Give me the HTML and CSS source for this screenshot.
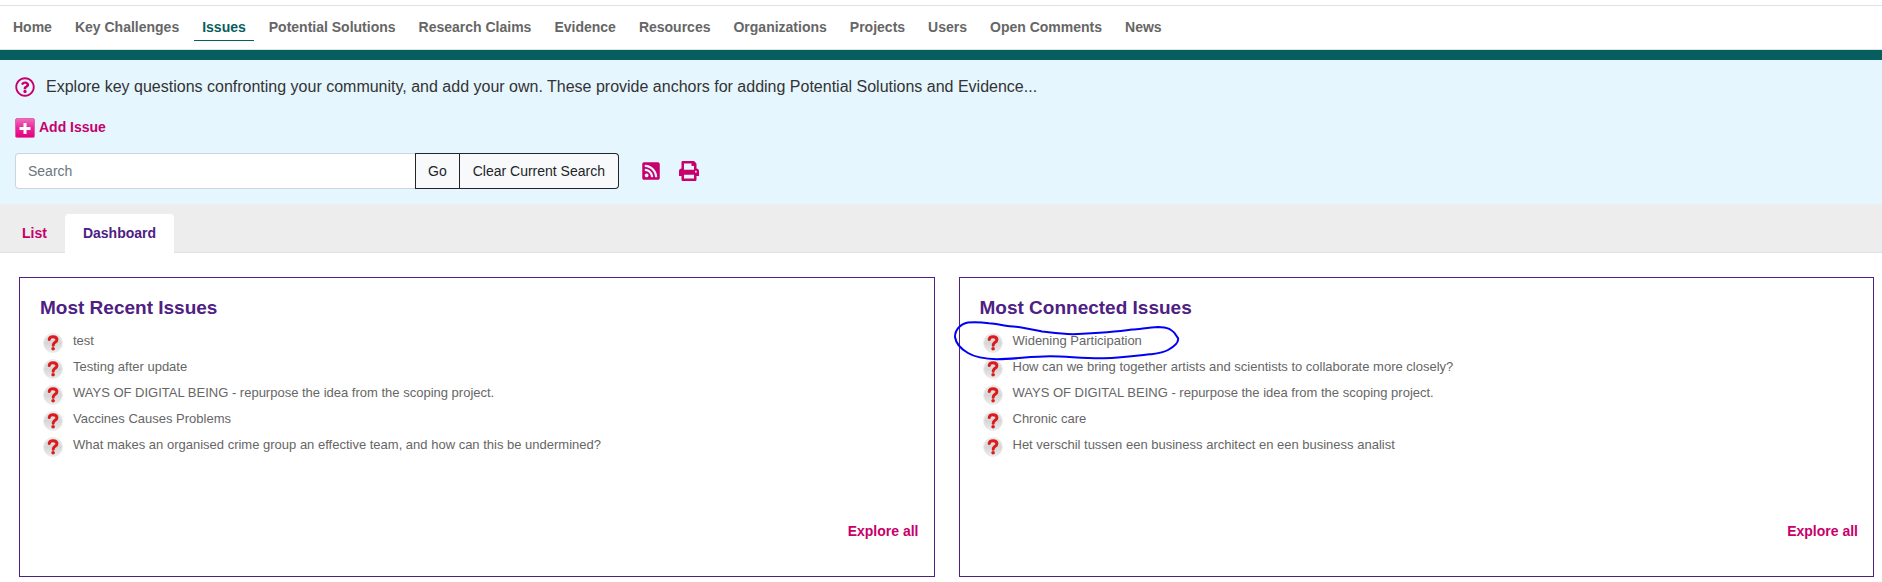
FILE: index.html
```html
<!DOCTYPE html>
<html lang="en">
<head>
<meta charset="utf-8">
<meta name="viewport" content="width=device-width, initial-scale=1">
<title>Issues</title>
<link rel="stylesheet" href="styles.css">
</head>
<body>
<svg class="defs" aria-hidden="true">
  <defs>
    <linearGradient id="disc" x1="0" y1="0" x2="0" y2="1"><stop offset="0" stop-color="#ececec"/><stop offset=".5" stop-color="#d6d6d6"/><stop offset="1" stop-color="#ececec"/></linearGradient>
    <linearGradient id="pink" x1="0" y1="0" x2="0" y2="1"><stop offset="0" stop-color="#ee6fbb"/><stop offset=".5" stop-color="#e8259a"/><stop offset="1" stop-color="#e5007d"/></linearGradient>
  </defs>
  <symbol id="issue" viewBox="0 0 20 20">
    <circle cx="10" cy="10" r="9.4" fill="url(#disc)" stroke="#ebebeb"/>
    <path d="M6.200 6.400C6.500 4.500 8.200 3.700 10 3.700c2.300 0 3.900 1.100 3.900 3 0 2.800-3.700 2.500-3.700 5.500" fill="none" stroke="#dc1c1c" stroke-width="3" stroke-linecap="round"/>
    <circle cx="10.100" cy="15.800" r="1.800" fill="#dc1c1c"/>
  </symbol>
</svg>

<nav class="nav" aria-label="Main">
  <a href="#">Home</a>
  <a href="#">Key Challenges</a>
  <a href="#" class="current" aria-current="page">Issues</a>
  <a href="#">Potential Solutions</a>
  <a href="#">Research Claims</a>
  <a href="#">Evidence</a>
  <a href="#">Resources</a>
  <a href="#">Organizations</a>
  <a href="#">Projects</a>
  <a href="#">Users</a>
  <a href="#">Open Comments</a>
  <a href="#">News</a>
</nav>

<header class="intro">
  <p class="lead">
    <svg class="icon" viewBox="0 0 512 512" aria-hidden="true"><path d="M256 8C119.043 8 8 119.083 8 256c0 136.997 111.043 248 248 248s248-111.003 248-248C504 119.083 392.957 8 256 8zm0 448c-110.532 0-200-89.431-200-200 0-110.495 89.472-200 200-200 110.491 0 200 89.471 200 200 0 110.530-89.431 200-200 200zm107.244-255.200c0 67.052-72.421 68.084-72.421 92.863V300c0 6.627-5.373 12-12 12h-45.647c-6.627 0-12-5.373-12-12v-8.659c0-35.745 27.100-50.034 47.579-61.516 17.561-9.845 28.324-16.541 28.324-29.579 0-17.246-21.999-28.693-39.784-28.693-23.189 0-33.894 10.977-48.942 29.969-4.057 5.120-11.460 6.071-16.666 2.124l-27.824-21.098c-5.107-3.872-6.251-11.066-2.644-16.363C184.846 131.491 214.940 112 261.794 112c49.071 0 101.450 38.304 101.450 88.800zM298 368c0 23.159-18.841 42-42 42s-42-18.841-42-42 18.841-42 42-42 42 18.841 42 42z"/></svg>
    <span>Explore key questions confronting your community, and add your own. These provide anchors for adding Potential Solutions and Evidence...</span>
  </p>
  <a class="add" href="#">
    <svg class="icon" viewBox="0 0 20 20" aria-hidden="true"><rect x=".5" y=".5" width="19" height="19" rx="1.500" fill="url(#pink)" stroke="#e263ac"/><path d="M10 5v11M4.500 10.500h11" stroke="#fff" stroke-width="3"/></svg>
    <span>Add Issue</span>
  </a>
  <form class="tools">
    <div class="search">
      <input type="search" placeholder="Search" aria-label="Search">
      <button type="button">Go</button>
      <button type="button">Clear Current Search</button>
    </div>
    <a href="#" aria-label="RSS feed"><svg class="icon" viewBox="-32 0 512 512" aria-hidden="true"><path d="M400 32H48C21.490 32 0 53.490 0 80v352c0 26.510 21.490 48 48 48h352c26.510 0 48-21.490 48-48V80c0-26.510-21.490-48-48-48zM112 416c-26.510 0-48-21.490-48-48s21.490-48 48-48 48 21.490 48 48-21.490 48-48 48zm157.533 0h-34.335c-6.011 0-11.051-4.636-11.442-10.634-5.214-80.050-69.243-143.920-149.123-149.123-5.997-.390-10.633-5.431-10.633-11.441v-34.335c0-6.535 5.468-11.777 11.994-11.425 110.546 5.974 198.997 94.536 204.964 204.964.352 6.526-4.890 11.994-11.425 11.994zm103.027 0h-34.334c-6.161 0-11.175-4.882-11.427-11.038-5.598-136.535-115.204-246.161-251.760-251.760C68.882 152.949 64 147.935 64 141.774V107.440c0-6.454 5.338-11.664 11.787-11.432 167.830 6.025 302.210 141.191 308.205 308.205.232 6.449-4.978 11.787-11.432 11.787z"/></svg></a>
    <a href="#" aria-label="Print"><svg class="icon" viewBox="0 0 512 512" aria-hidden="true"><path d="M448 192V77.250c0-8.490-3.370-16.620-9.370-22.630L393.370 9.370c-6-6-14.140-9.370-22.630-9.370H96C78.330 0 64 14.330 64 32v160c-35.350 0-64 28.650-64 64v112c0 8.840 7.160 16 16 16h48v96c0 17.670 14.330 32 32 32h320c17.670 0 32-14.330 32-32v-96h48c8.840 0 16-7.160 16-16V256c0-35.350-28.650-64-64-64zm-64 256H128v-96h256v96zm0-224H128V64h192v48c0 8.840 7.160 16 16 16h48v96zm48 72c-13.250 0-24-10.750-24-24 0-13.260 10.750-24 24-24s24 10.740 24 24c0 13.250-10.750 24-24 24z"/></svg></a>
  </form>
</header>

<nav class="tabs" aria-label="View">
  <a href="#">List</a>
  <a href="#" class="active" aria-current="page">Dashboard</a>
</nav>

<main class="panels">
  <section class="panel">
    <h2>Most Recent Issues</h2>
    <ul>
      <li><svg class="icon" aria-hidden="true"><use href="#issue"/></svg><a href="#">test</a></li>
      <li><svg class="icon" aria-hidden="true"><use href="#issue"/></svg><a href="#">Testing after update</a></li>
      <li><svg class="icon" aria-hidden="true"><use href="#issue"/></svg><a href="#">WAYS OF DIGITAL BEING - repurpose the idea from the scoping project.</a></li>
      <li><svg class="icon" aria-hidden="true"><use href="#issue"/></svg><a href="#">Vaccines Causes Problems</a></li>
      <li><svg class="icon" aria-hidden="true"><use href="#issue"/></svg><a href="#">What makes an organised crime group an effective team, and how can this be undermined?</a></li>
    </ul>
    <a class="more" href="#">Explore all</a>
  </section>
  <section class="panel">
    <h2>Most Connected Issues</h2>
    <ul>
      <li><svg class="icon" aria-hidden="true"><use href="#issue"/></svg><a href="#">Widening Participation</a></li>
      <li><svg class="icon" aria-hidden="true"><use href="#issue"/></svg><a href="#">How can we bring together artists and scientists to collaborate more closely?</a></li>
      <li><svg class="icon" aria-hidden="true"><use href="#issue"/></svg><a href="#">WAYS OF DIGITAL BEING - repurpose the idea from the scoping project.</a></li>
      <li><svg class="icon" aria-hidden="true"><use href="#issue"/></svg><a href="#">Chronic care</a></li>
      <li><svg class="icon" aria-hidden="true"><use href="#issue"/></svg><a href="#">Het verschil tussen een business architect en een business analist</a></li>
    </ul>
    <a class="more" href="#">Explore all</a>
    <svg class="ring" viewBox="0 0 240 50" aria-hidden="true"><path d="M39 5.300C30 4 24 4 18 4.500C10 6 5 12 5 19C6 26 11 31 18 35C26 40 35 41 47 41.300C65 41 82 38.300 100 38.300C118 38.500 135 40.700 154 40.300C170 40 185 38 200 36.300C207 35.500 213 35 218 32C225 28 229 24 228 20C226 18 226 15 221 12C217 9 213 9.500 208 9C198 9.500 190 11 182 11.500C165 14 140 15.500 123 16.300C108 15.500 98 14 92 13.500C80 11 73 9.500 66 8.700C56 8 48 6 39 5.300Z"/></svg>
  </section>
</main>
</body>
</html>
```
FILE: styles.css
```css
* {
  box-sizing: border-box;
}

body {
  margin: 0;
  background: #fff;
  color: #333;
  font: 14px/20px "Liberation Sans", Arial, sans-serif;
}

a {
  color: #c7006b;
  font-weight: bold;
  text-decoration: none;
}

.defs {
  position: absolute;
  width: 0;
  height: 0;
}

.icon {
  display: block;
  flex: none;
  width: 20px;
  height: 20px;
  fill: #c7006b;
}

.nav {
  display: flex;
  flex-wrap: wrap;
  gap: 7px;
  margin-top: 5px;
  padding: 7px 5px 8px;
  border-top: 1px solid #dee2e6;
  border-bottom: 1px solid #dee2e6;
}

.nav a {
  padding: 4px 8px 3px;
  border-bottom: 1px solid transparent;
  color: #666;
}

.nav .current {
  border-bottom-color: #075e5e;
  color: #075e5e;
}

.intro {
  display: flex;
  flex-direction: column;
  align-items: flex-start;
  padding: 16px 15px 15px;
  border-top: 10px solid #075e5e;
  background: #e5f6ff;
}

.lead {
  display: flex;
  align-items: center;
  gap: 11px;
  margin: 0 0 20px;
  font-size: 16px;
  line-height: 22px;
}

.add {
  display: flex;
  gap: 4px;
  margin-bottom: 15px;
  line-height: 18px;
}

.tools {
  display: flex;
  align-items: center;
  gap: 18px;
}

.search {
  display: flex;
  margin-right: 4px;
}

.search input,
.search button {
  height: 36px;
  margin: 0;
  padding: 0 12px;
  font: inherit;
}

.search input {
  width: 400px;
  border: 1px solid #ced4da;
  border-right: 0;
  border-radius: 4px 0 0 4px;
  background: #fff;
}

.search input::placeholder {
  color: #6c757d;
  opacity: 1;
}

.search button {
  border: 1px solid #212529;
  background: #f8f9fa;
  color: #212529;
}

.search button + button {
  border-left: 0;
  border-radius: 0 4px 4px 0;
  padding: 0 13px;
}

.tabs {
  display: flex;
  padding: 10px 4px 0;
  background: #ededed;
  border-bottom: 1px solid #dee2e6;
}

.tabs a {
  padding: 9px 18px;
}

.tabs .active {
  margin-bottom: -1px;
  padding-bottom: 10px;
  border-radius: 4px 4px 0 0;
  background: #fff;
  color: #4e2083;
}

.panels {
  display: grid;
  grid-template-columns: 1fr 1fr;
  gap: 24px;
  padding: 24px 8px 5px 19px;
}

.panel {
  position: relative;
  display: flex;
  flex-direction: column;
  padding: 17px 15px 35px 20px;
  border: 1px solid #4e2083;
}

.panel h2 {
  margin: 0 0 6px;
  color: #4e2083;
  font-size: 19px;
  line-height: 26px;
}

.panel ul {
  min-height: 194px;
  margin: 0;
  padding: 0 0 0 3px;
  list-style: none;
}

.panel li {
  display: flex;
  align-items: flex-end;
  gap: 10px;
  height: 26px;
}

.panel li a {
  color: #666;
  font-size: 13px;
  font-weight: normal;
  line-height: 24px;
}

.more {
  align-self: flex-end;
}

.ring {
  position: absolute;
  top: 40px;
  left: -10px;
  width: 240px;
  height: 50px;
  fill: none;
  stroke: #0000f5;
  stroke-width: 2;
}
```
